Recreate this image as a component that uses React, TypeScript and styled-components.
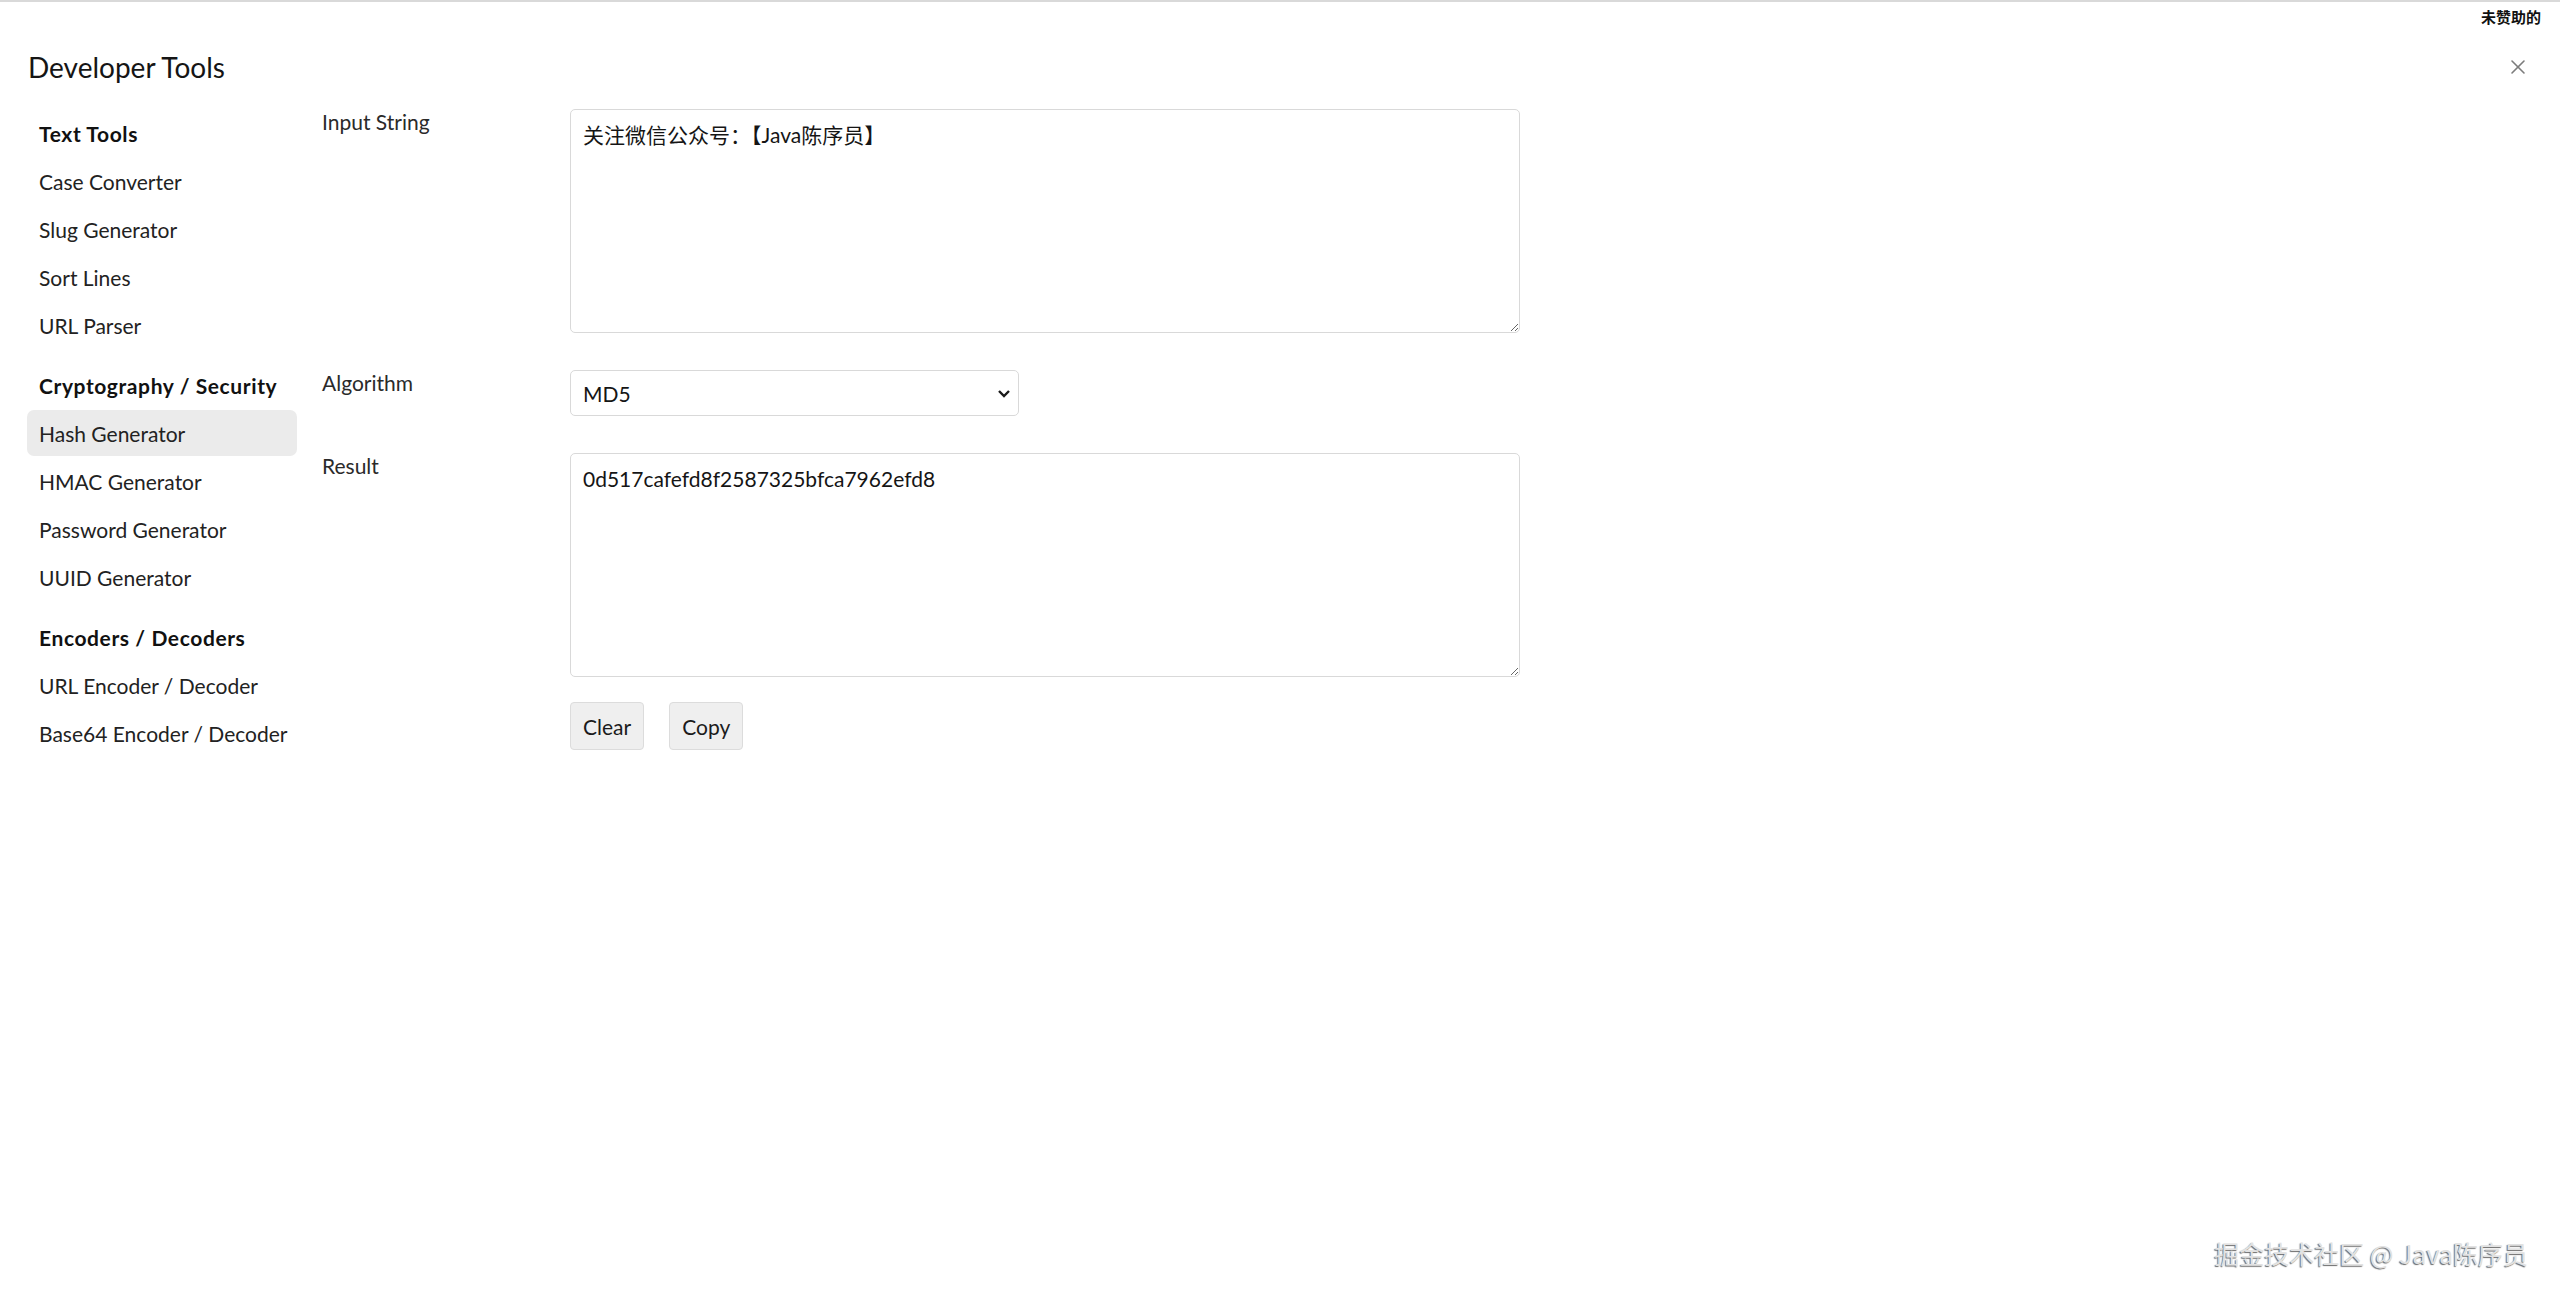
import React, { useState } from 'react';
import styled, { createGlobalStyle } from 'styled-components';
import { X } from 'lucide-react';

const GlobalStyle = createGlobalStyle`
  html, body {
    margin: 0;
    padding: 0;
    background: #ffffff;
  }
  body {
    font-family: Lato, "Noto Sans", "Noto Sans CJK SC", sans-serif;
    color: #1b1b1b;
  }
  * {
    box-sizing: border-box;
  }
`;

const Page = styled.div`
  position: relative;
  min-height: 1305px;
  border-top: 2px solid #d9d9d9;
`;

const TopBar = styled.div`
  height: 28px;
  display: flex;
  align-items: center;
  justify-content: flex-end;
  padding-right: 19px;
  font-family: "Noto Sans CJK SC", sans-serif;
  font-size: 15px;
  font-weight: 700;
  color: #111;
`;

const Header = styled.header`
  height: 79px;
  display: flex;
  align-items: flex-start;
  justify-content: space-between;
  padding: 19px 29px 0 28px;
`;

const Title = styled.h1`
  margin: 0;
  font-size: 28px;
  line-height: 36px;
  font-weight: 400;
  color: #151515;
`;

const CloseButton = styled.button`
  width: 26px;
  height: 26px;
  margin-top: 5px;
  padding: 0;
  border: none;
  background: transparent;
  color: #7c7c7c;
  display: flex;
  align-items: center;
  justify-content: center;
  cursor: pointer;
`;

const Body = styled.div`
  display: flex;
  align-items: flex-start;
  gap: 25px;
  padding-left: 27px;
`;

const Sidebar = styled.nav`
  width: 270px;
  display: flex;
  flex-direction: column;
  gap: 12px;
`;

const Group = styled.div`
  display: flex;
  flex-direction: column;
`;

const GroupTitle = styled.div`
  height: 48px;
  display: flex;
  align-items: center;
  padding-left: 12px;
  font-size: 21px;
  font-weight: 700;
  letter-spacing: 0.6px;
  color: #111;
`;

const NavItem = styled.a<{ $active?: boolean }>`
  height: 46px;
  margin: 1px 0;
  display: flex;
  align-items: center;
  padding-left: 12px;
  border-radius: 7px;
  font-size: 21px;
  color: #222;
  text-decoration: none;
  cursor: pointer;
  background: ${(p) => (p.$active ? '#ebebeb' : 'transparent')};

  &:hover {
    background: #ebebeb;
  }
`;

const Content = styled.main`
  display: flex;
  flex-direction: column;
  gap: 37px;
`;

const FieldRow = styled.div`
  display: flex;
  align-items: flex-start;
`;

const Label = styled.label`
  width: 248px;
  padding-top: 1px;
  font-size: 21px;
  line-height: 24px;
  color: #2a2a2a;
`;

const Control = styled.div`
  width: 950px;
  display: flex;
  flex-direction: column;
`;

const TextArea = styled.textarea`
  width: 100%;
  height: 224px;
  padding: 9px 12px;
  border: 1px solid #d9d9d9;
  border-radius: 5px;
  font-family: Lato, "Noto Sans CJK SC", sans-serif;
  font-size: 21px;
  line-height: 32px;
  color: #151515;
  background: #fff;
  outline: none;
`;

const SelectWrap = styled.div`
  position: relative;
  width: 449px;
`;

const Select = styled.select`
  width: 100%;
  height: 46px;
  padding: 0 40px 0 12px;
  border: 1px solid #d9d9d9;
  border-radius: 5px;
  background: #fff;
  appearance: none;
  font-family: Lato, sans-serif;
  font-size: 21px;
  color: #151515;
  outline: none;
`;

const Chevron = styled.svg`
  position: absolute;
  right: 8px;
  top: 19px;
  pointer-events: none;
`;

const ButtonRow = styled.div`
  display: flex;
  gap: 25px;
  margin-top: 25px;
`;

const Button = styled.button`
  height: 48px;
  padding: 0 12px;
  border: 1px solid #dcdcdc;
  border-radius: 4px;
  background: #efefef;
  font-family: Lato, sans-serif;
  font-size: 21px;
  color: #1b1b1b;
  cursor: pointer;
`;

const Watermark = styled.div`
  position: absolute;
  right: 32px;
  bottom: 34px;
  font-family: "Noto Sans CJK SC", sans-serif;
  font-size: 25px;
  color: #e2e2e2;
  text-shadow: -1px 1px 1px #6a6a6a;
  pointer-events: none;
`;

const groups = [
  {
    title: 'Text Tools',
    items: ['Case Converter', 'Slug Generator', 'Sort Lines', 'URL Parser'],
  },
  {
    title: 'Cryptography / Security',
    items: ['Hash Generator', 'HMAC Generator', 'Password Generator', 'UUID Generator'],
  },
  {
    title: 'Encoders / Decoders',
    items: ['URL Encoder / Decoder', 'Base64 Encoder / Decoder'],
  },
];

export default function App() {
  const [input, setInput] = useState('关注微信公众号：【Java陈序员】');
  const [algo, setAlgo] = useState('MD5');
  const [result, setResult] = useState('0d517cafefd8f2587325bfca7962efd8');

  return (
    <>
      <GlobalStyle />
      <Page>
        <TopBar>未赞助的</TopBar>
        <Header>
          <Title>Developer Tools</Title>
          <CloseButton aria-label="Close">
            <X size={24} strokeWidth={1.6} />
          </CloseButton>
        </Header>
        <Body>
          <Sidebar>
            {groups.map((g) => (
              <Group key={g.title}>
                <GroupTitle>{g.title}</GroupTitle>
                {g.items.map((item) => (
                  <NavItem key={item} $active={item === 'Hash Generator'}>
                    {item}
                  </NavItem>
                ))}
              </Group>
            ))}
          </Sidebar>
          <Content>
            <FieldRow>
              <Label>Input String</Label>
              <Control>
                <TextArea value={input} onChange={(e) => setInput(e.target.value)} />
              </Control>
            </FieldRow>
            <FieldRow>
              <Label>Algorithm</Label>
              <Control>
                <SelectWrap>
                  <Select value={algo} onChange={(e) => setAlgo(e.target.value)}>
                    <option>MD5</option>
                    <option>SHA-1</option>
                    <option>SHA-256</option>
                    <option>SHA-512</option>
                  </Select>
                  <Chevron width="14" height="9" viewBox="0 0 14 9">
                    <path d="M2 2 L7 7 L12 2" fill="none" stroke="#1a1a1a" strokeWidth="2.4" />
                  </Chevron>
                </SelectWrap>
              </Control>
            </FieldRow>
            <FieldRow>
              <Label>Result</Label>
              <Control>
                <TextArea value={result} readOnly />
                <ButtonRow>
                  <Button onClick={() => { setInput(''); setResult(''); }}>Clear</Button>
                  <Button>Copy</Button>
                </ButtonRow>
              </Control>
            </FieldRow>
          </Content>
        </Body>
        <Watermark>掘金技术社区 @ Java陈序员</Watermark>
      </Page>
    </>
  );
}
